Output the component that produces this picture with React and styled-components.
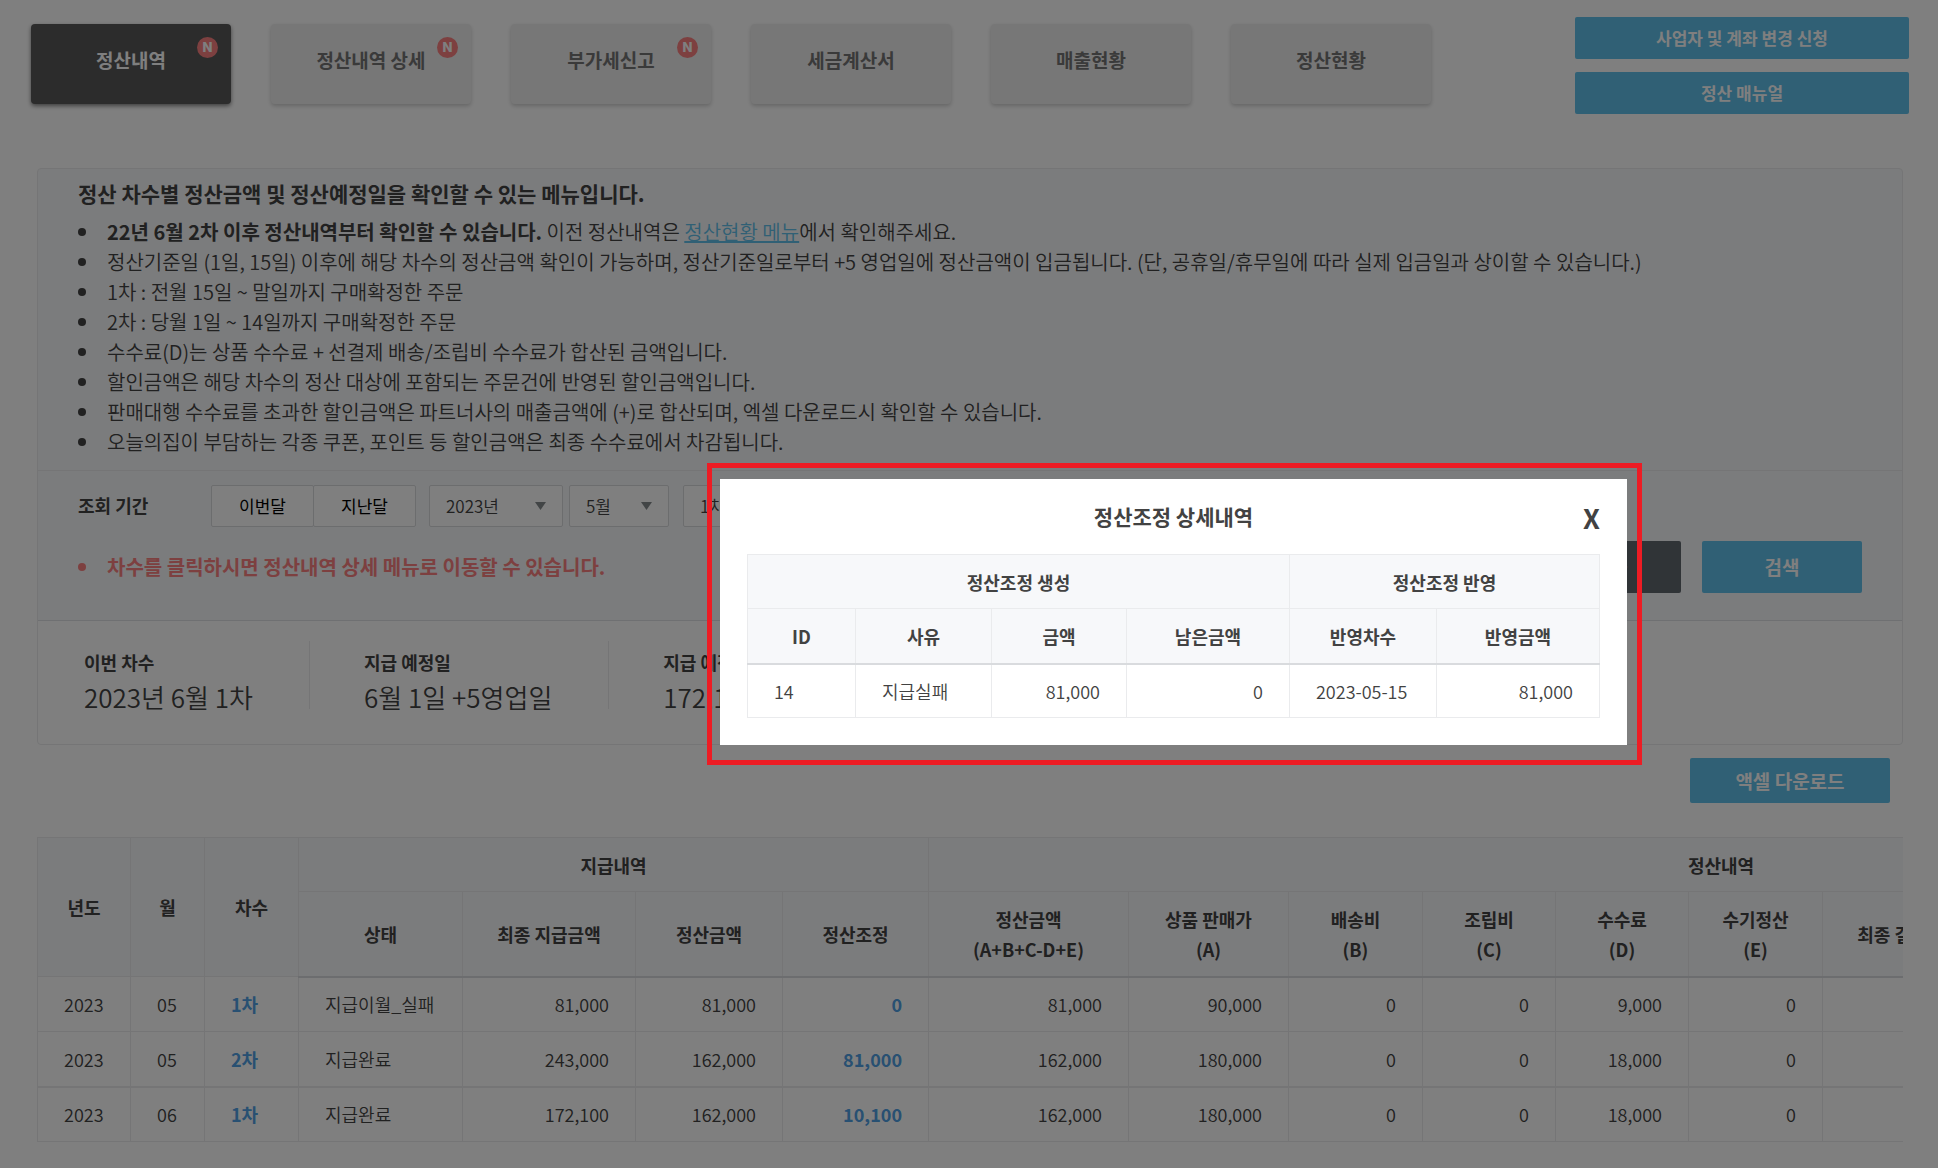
import React from "react"
import styled, { createGlobalStyle } from "styled-components"

const GlobalStyle = createGlobalStyle`
  * {
    box-sizing: border-box;
  }
  body {
    margin: 0;
    background: #fff;
    color: #424242;
    font-family: "Noto Sans CJK KR", "Noto Sans", sans-serif;
    font-size: 18px;
    font-weight: 350;
    line-height: 30px;
  }
  button, select {
    font-family: inherit;
    margin: 0;
  }
`

const Page = styled.div`
  padding-bottom: 26px;
  overflow-x: hidden;
`

const Header = styled.header`
  display: flex;
  justify-content: space-between;
  align-items: flex-start;
  padding: 17px 29px 0 31px;
`

const Tabs = styled.nav`
  display: flex;
  gap: 40px;
  padding-top: 7px;
`

const Tab = styled.button`
  position: relative;
  width: 200px;
  height: 80px;
  padding: 0 0 10px;
  border: 0;
  border-radius: 4px;
  background: ${(props) => (props.$active ? "#585858" : "#eee")};
  color: ${(props) => (props.$active ? "#fff" : "#757575")};
  box-shadow: 0 2px 4px rgba(0, 0, 0, ${(props) => (props.$active ? 0.5 : 0.2)});
  font-size: 19px;
  font-weight: bold;
`

const NewBadge = styled.span`
  position: absolute;
  top: 13px;
  right: 13px;
  width: 21px;
  height: 21px;
  border-radius: 50%;
  background: #fa8080;
  color: #fff;
  font-family: Inter, sans-serif;
  font-size: 13px;
  font-weight: 800;
  line-height: 21px;
  text-align: center;
`

const HeaderActions = styled.div`
  display: flex;
  flex-direction: column;
  gap: 13px;
  width: 334px;
`

const Button = styled.button`
  width: ${(props) => props.$width || "100%"};
  height: ${(props) => props.$height || "42px"};
  padding: 0 0 1px;
  border: 0;
  border-radius: 2px;
  background: ${(props) => (props.$dark ? "#60686e" : "#60c0ea")};
  color: #fff;
  font-size: ${(props) => props.$size || "19px"};
  font-weight: bold;
`

const Panel = styled.section`
  margin: 54px 35px 0 37px;
  border: 1px solid #eaebed;
  border-radius: 4px;
  background: #f7f8fa;
`

const Guide = styled.div`
  padding: 9px 40px 13px;
  border-bottom: 1px solid #eaebed;

  h2 {
    margin: 0 0 9px;
    font-size: 21px;
    line-height: 30px;
  }
  a {
    color: #60c0ea;
  }
`

const BulletList = styled.ul`
  margin: 0;
  padding: 0;
  list-style: none;
  font-size: 20px;
  color: ${(props) => (props.$alert ? "#fa8080" : "inherit")};
  font-weight: ${(props) => (props.$alert ? "bold" : "inherit")};

  li {
    display: flex;
    align-items: center;
  }
  li::before {
    content: "";
    flex: none;
    width: 8px;
    height: 8px;
    margin-right: 21px;
    border-radius: 50%;
    background: currentColor;
  }
`

const Filter = styled.form`
  padding: 14px 40px 27px;
  border-bottom: 1px solid #dfe1e4;
`

const FilterRow = styled.div`
  display: flex;
  align-items: center;
`

const FilterLabel = styled.span`
  width: 133px;
  padding-bottom: 2px;
  font-weight: bold;
`

const PeriodGroup = styled.div`
  display: flex;
  margin-right: 13px;

  button {
    width: 103px;
    height: 42px;
    padding: 0 0 2px;
    border: 1px solid #d8dadd;
    border-radius: 2px;
    background: #fff;
    color: #000;
    font-size: 17px;
  }
  button + button {
    margin-left: -1px;
  }
`

const SelectBox = styled.label`
  display: grid;
  align-items: center;
  width: ${(props) => props.$width};
  margin-right: ${(props) => props.$gap || "0"};

  select {
    grid-area: 1 / 1;
    width: 100%;
    height: 42px;
    padding: 0 16px 2px;
    border: 1px solid #d8dadd;
    border-radius: 2px;
    background: #fff;
    color: #424242;
    font-size: 17px;
    font-weight: inherit;
    appearance: none;
  }
  svg {
    grid-area: 1 / 1;
    justify-self: end;
    margin-right: 17px;
    pointer-events: none;
  }
`

const ActionRow = styled(FilterRow)`
  justify-content: space-between;
  margin-top: 14px;
`

const Actions = styled.div`
  display: flex;
  gap: 21px;
`

const Summary = styled.dl`
  display: flex;
  margin: 0;
  padding: 20px 0 35px;
  border-radius: 0 0 4px 4px;
  background: #fff;
`

const SummaryItem = styled.div`
  height: 68px;
  padding: 6px 56px 0 54px;

  &:first-child {
    padding-left: 46px;
  }
  & + & {
    border-left: 1px solid #eaebed;
  }
  dt {
    font-weight: bold;
  }
  dd {
    margin: 0;
    font-size: 26px;
    line-height: 40px;
  }
`

const Download = styled.div`
  display: flex;
  justify-content: flex-end;
  padding: 13px 48px 34px 0;
`

const TableScroll = styled.div`
  margin: 0 35px 0 37px;
  overflow-x: auto;
  scrollbar-width: none;
`

const Table = styled.table`
  width: ${(props) => props.$width};
  table-layout: fixed;
  border-collapse: collapse;

  th, td {
    height: 54px;
    padding: 0 26px;
    border: 1px solid #eaebed;
    white-space: nowrap;
  }
  th {
    padding: 0;
    background: #f7f8fa;
    font-weight: bold;
    text-align: center;
  }
  thead tr:last-child th {
    height: ${(props) => props.$headHeight || "55px"};
    border-bottom: 2px solid #d9dbde;
  }
  tbody td {
    height: ${(props) => props.$rowHeight || "54px"};
  }
  td a {
    color: #50a0e4;
    font-weight: bold;
    text-decoration: none;
  }
`

const BodyRow = styled.tr`
  td {
    border-top-width: ${(props) => (props.$newMonth ? "2px" : "1px")};
  }
`

const Cell = styled.td`
  text-align: ${(props) => (props.$number ? "right" : "left")};
`

const Overlay = styled.div`
  position: fixed;
  inset: 0;
  display: flex;
  justify-content: flex-end;
  align-items: flex-start;
  padding: 463px 296px 0 0;
  background: rgba(0, 0, 0, 0.5);
`

const Highlight = styled.div`
  padding: 11px 10px 15px 8px;
  border: 5px solid #ed1c24;
`

const Modal = styled.div`
  padding: 19px 27px 27px;
  background: #fff;
`

const ModalHeader = styled.div`
  display: grid;
  grid-template-columns: 1fr auto 1fr;
  align-items: center;
  padding-bottom: 20px;

  h1 {
    grid-column: 2;
    margin: 0;
    font-size: 21px;
    line-height: 36px;
  }
  button {
    justify-self: end;
    padding: 2px 0 0;
    margin-bottom: -2px;
    border: 0;
    background: none;
    color: #424242;
    font-size: 27px;
    font-weight: bold;
    line-height: 36px;
  }
`

const tabs = [
  { label: "정산내역", isNew: true, active: true },
  { label: "정산내역 상세", isNew: true },
  { label: "부가세신고", isNew: true },
  { label: "세금계산서" },
  { label: "매출현황" },
  { label: "정산현황" },
]

const guides = [
  "정산기준일 (1일, 15일) 이후에 해당 차수의 정산금액 확인이 가능하며, 정산기준일로부터 +5 영업일에 정산금액이 입금됩니다. (단, 공휴일/휴무일에 따라 실제 입금일과 상이할 수 있습니다.)",
  "1차 : 전월 15일 ~ 말일까지 구매확정한 주문",
  "2차 : 당월 1일 ~ 14일까지 구매확정한 주문",
  "수수료(D)는 상품 수수료 + 선결제 배송/조립비 수수료가 합산된 금액입니다.",
  "할인금액은 해당 차수의 정산 대상에 포함되는 주문건에 반영된 할인금액입니다.",
  "판매대행 수수료를 초과한 할인금액은 파트너사의 매출금액에 (+)로 합산되며, 엑셀 다운로드시 확인할 수 있습니다.",
  "오늘의집이 부담하는 각종 쿠폰, 포인트 등 할인금액은 최종 수수료에서 차감됩니다.",
]

const summary = [
  { label: "이번 차수", value: "2023년 6월 1차" },
  { label: "지급 예정일", value: "6월 1일 +5영업일" },
  { label: "지급 예정금액", value: "172,100원" },
]

const columns = [93, 74, 94, 164, 173, 147, 146, 200, 160, 134, 133, 133, 134, 173, 518]

const settlementHeads = [
  ["정산금액", "(A+B+C-D+E)"],
  ["상품 판매가", "(A)"],
  ["배송비", "(B)"],
  ["조립비", "(C)"],
  ["수수료", "(D)"],
  ["수기정산", "(E)"],
]

const rows = [
  {
    year: "2023", month: "05", round: "1차", status: "지급이월_실패",
    paid: ["81,000", "81,000"], adjust: "0",
    amounts: ["81,000", "90,000", "0", "0", "9,000", "0"],
  },
  {
    year: "2023", month: "05", round: "2차", status: "지급완료",
    paid: ["243,000", "162,000"], adjust: "81,000",
    amounts: ["162,000", "180,000", "0", "0", "18,000", "0"],
  },
  {
    year: "2023", month: "06", round: "1차", status: "지급완료", newMonth: true,
    paid: ["172,100", "162,000"], adjust: "10,100",
    amounts: ["162,000", "180,000", "0", "0", "18,000", "0"],
  },
]

const Columns = ({ widths }) => (
  <colgroup>
    {widths.map((width, i) => (
      <col key={i} style={{ width }} />
    ))}
  </colgroup>
)

const Select = ({ label, value, width, gap }) => (
  <SelectBox $width={width} $gap={gap}>
    <select aria-label={label} defaultValue={value}>
      <option>{value}</option>
    </select>
    <svg width="11" height="8" viewBox="0 0 11 8" aria-hidden="true">
      <path d="M0 0h11L5.5 8z" fill="#858a8d" />
    </svg>
  </SelectBox>
)

const SettlementTable = () => (
  <TableScroll>
    <Table $width="2476px" $headHeight="85px" $rowHeight="55px">
      <Columns widths={columns} />
      <thead>
        <tr>
          <th rowSpan={2}>년도</th>
          <th rowSpan={2}>월</th>
          <th rowSpan={2}>차수</th>
          <th colSpan={4}>지급내역</th>
          <th colSpan={8}>정산내역</th>
        </tr>
        <tr>
          <th>상태</th>
          <th>최종 지급금액</th>
          <th>정산금액</th>
          <th>정산조정</th>
          {settlementHeads.map(([name, code]) => (
            <th key={code}>
              {name}
              <br />
              {code}
            </th>
          ))}
          <th>최종 결제금액</th>
          <th />
        </tr>
      </thead>
      <tbody>
        {rows.map((row) => (
          <BodyRow key={row.month + row.round} $newMonth={row.newMonth}>
            <Cell>{row.year}</Cell>
            <Cell>{row.month}</Cell>
            <Cell>
              <a href="#detail">{row.round}</a>
            </Cell>
            <Cell>{row.status}</Cell>
            {row.paid.map((amount, i) => (
              <Cell key={i} $number>{amount}</Cell>
            ))}
            <Cell $number>
              <a href="#adjust">{row.adjust}</a>
            </Cell>
            {row.amounts.map((amount, i) => (
              <Cell key={i} $number>{amount}</Cell>
            ))}
            <Cell />
            <Cell />
          </BodyRow>
        ))}
      </tbody>
    </Table>
  </TableScroll>
)

const AdjustmentModal = () => (
  <Overlay>
    <Highlight>
      <Modal role="dialog" aria-modal="true" aria-labelledby="adjust-title">
        <ModalHeader>
          <h1 id="adjust-title">정산조정 상세내역</h1>
          <button type="button" aria-label="닫기">X</button>
        </ModalHeader>
        <Table $width="853px">
          <Columns widths={[108, 136, 135, 163, 147, 163]} />
          <thead>
            <tr>
              <th colSpan={4}>정산조정 생성</th>
              <th colSpan={2}>정산조정 반영</th>
            </tr>
            <tr>
              <th>ID</th>
              <th>사유</th>
              <th>금액</th>
              <th>남은금액</th>
              <th>반영차수</th>
              <th>반영금액</th>
            </tr>
          </thead>
          <tbody>
            <tr>
              <Cell>14</Cell>
              <Cell>지급실패</Cell>
              <Cell $number>81,000</Cell>
              <Cell $number>0</Cell>
              <Cell>2023-05-15</Cell>
              <Cell $number>81,000</Cell>
            </tr>
          </tbody>
        </Table>
      </Modal>
    </Highlight>
  </Overlay>
)

const App = () => (
  <>
    <GlobalStyle />
    <Page>
      <Header>
        <Tabs>
          {tabs.map((tab) => (
            <Tab key={tab.label} type="button" $active={tab.active}>
              {tab.label}
              {tab.isNew && <NewBadge>N</NewBadge>}
            </Tab>
          ))}
        </Tabs>
        <HeaderActions>
          <Button type="button" $size="17px">사업자 및 계좌 변경 신청</Button>
          <Button type="button" $size="17px">정산 매뉴얼</Button>
        </HeaderActions>
      </Header>

      <Panel>
        <Guide>
          <h2>정산 차수별 정산금액 및 정산예정일을 확인할 수 있는 메뉴입니다.</h2>
          <BulletList>
            <li>
              <span>
                <b>22년 6월 2차 이후 정산내역부터 확인할 수 있습니다.</b> 이전 정산내역은{" "}
                <a href="#status">정산현황 메뉴</a>에서 확인해주세요.
              </span>
            </li>
            {guides.map((guide) => (
              <li key={guide}>{guide}</li>
            ))}
          </BulletList>
        </Guide>
        <Filter>
          <FilterRow>
            <FilterLabel>조회 기간</FilterLabel>
            <PeriodGroup>
              <button type="button">이번달</button>
              <button type="button">지난달</button>
            </PeriodGroup>
            <Select label="년도" value="2023년" width="134px" gap="6px" />
            <Select label="월" value="5월" width="100px" gap="14px" />
            <Select label="차수" value="1차" width="100px" />
          </FilterRow>
          <ActionRow>
            <BulletList $alert>
              <li>차수를 클릭하시면 정산내역 상세 메뉴로 이동할 수 있습니다.</li>
            </BulletList>
            <Actions>
              <Button type="reset" $dark $width="160px" $height="52px">초기화</Button>
              <Button type="button" $width="160px" $height="52px">검색</Button>
            </Actions>
          </ActionRow>
        </Filter>
        <Summary>
          {summary.map((item) => (
            <SummaryItem key={item.label}>
              <dt>{item.label}</dt>
              <dd>{item.value}</dd>
            </SummaryItem>
          ))}
        </Summary>
      </Panel>

      <Download>
        <Button type="button" $width="200px" $height="45px">액셀 다운로드</Button>
      </Download>
      <SettlementTable />
    </Page>
    <AdjustmentModal />
  </>
)

export default App
